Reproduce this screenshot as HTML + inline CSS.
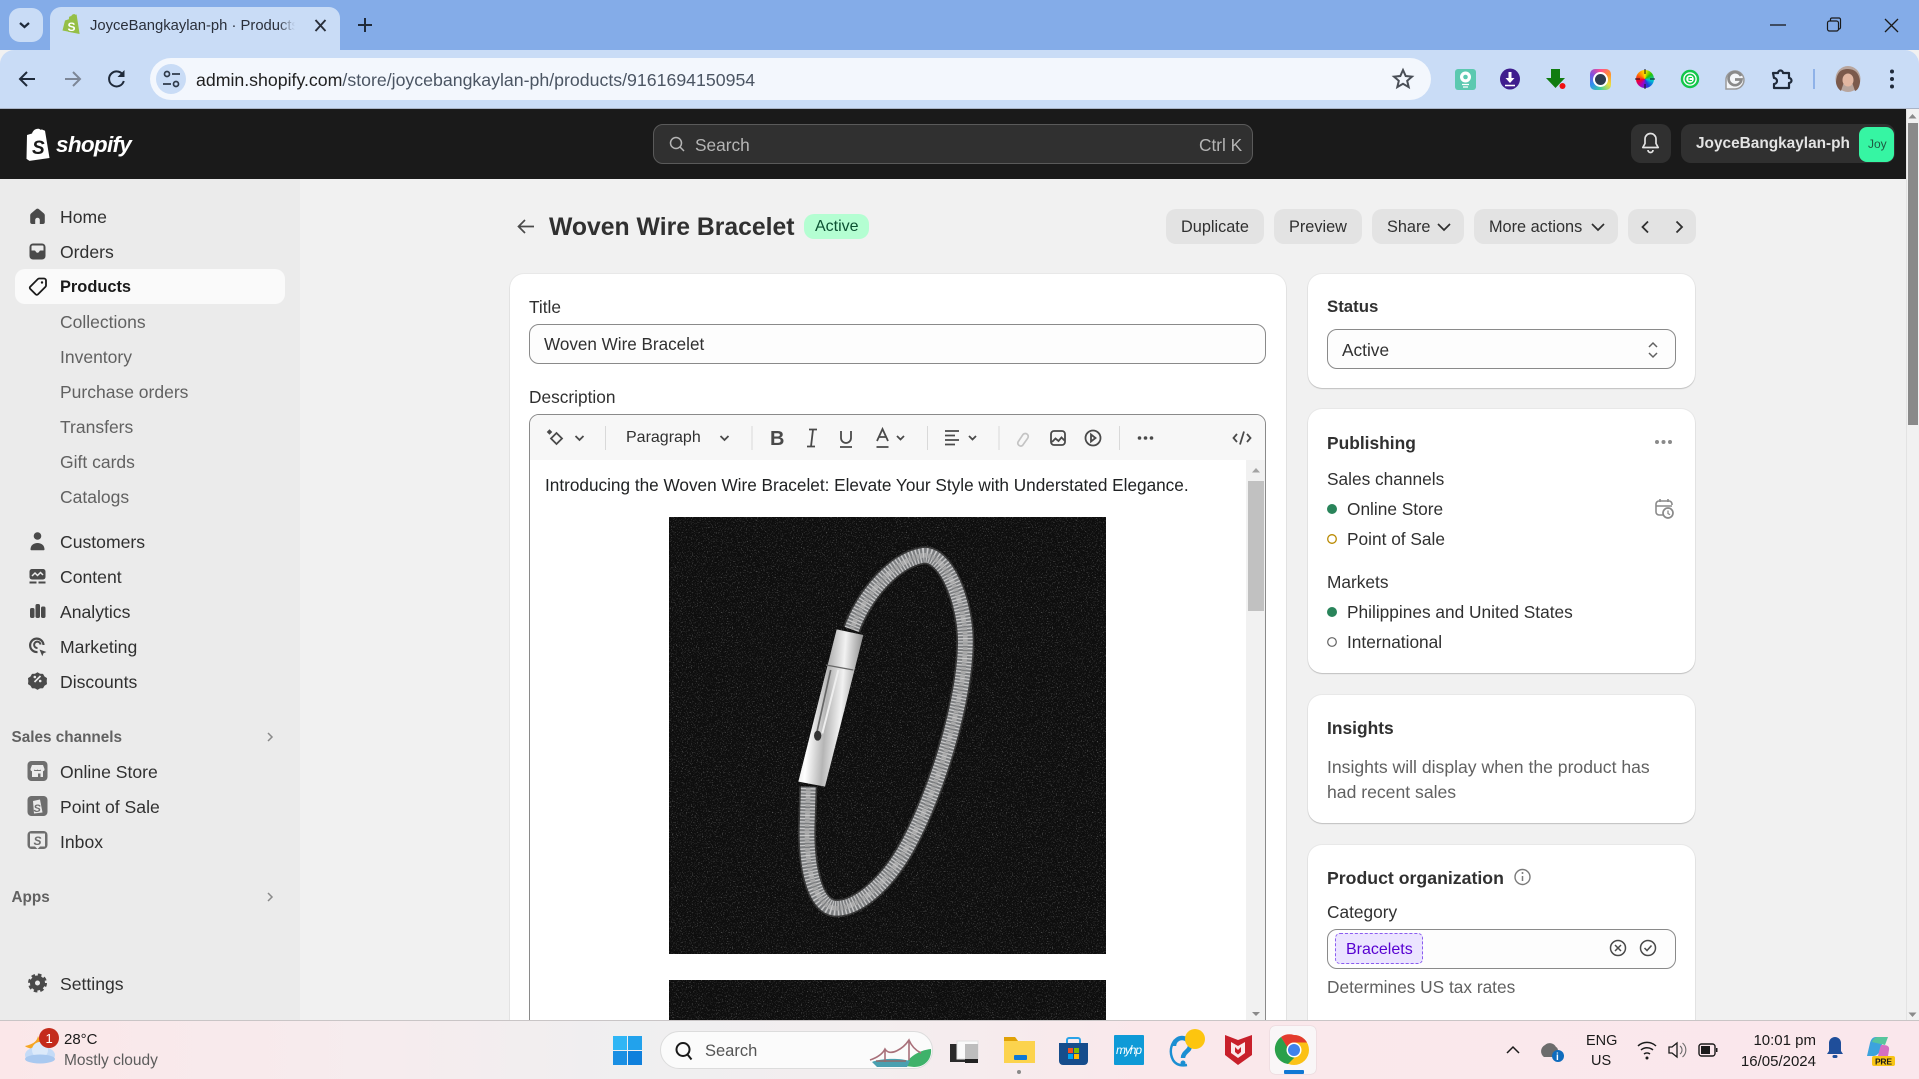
<!DOCTYPE html>
<html><head><meta charset="utf-8"><title>Woven Wire Bracelet</title>
<style>
html,body{margin:0;padding:0;width:1919px;height:1079px;overflow:hidden;background:#f1f1f1;font-family:"Liberation Sans",sans-serif;color:#303030}
.b{position:absolute;box-sizing:border-box}
.t{position:absolute;white-space:nowrap;line-height:20px;height:20px;font-size:17.3px;margin-top:1px;z-index:6}
.card{position:absolute;box-sizing:border-box;background:#fff;border-radius:14px;box-shadow:0 1px 1px rgba(0,0,0,.18),0 0 0 1px rgba(0,0,0,.035)}
.btn{position:absolute;box-sizing:border-box;background:#e3e3e3;border-radius:10px;height:35px;top:209px}
.nav{color:#303030;font-size:17.6px}.sub{color:#616161;font-size:17.5px}.hd{color:#616161;font-weight:bold;font-size:15.3px}
.bt{font-size:16.3px}
#ic{position:absolute;left:0;top:0;z-index:5}
</style></head><body>
<!-- browser chrome -->
<div class="b" style="left:0;top:0;width:1919px;height:50px;background:#84ace8"></div>
<div class="b" style="left:0;top:50px;width:1919px;height:59px;background:#c9dcf6;border-radius:14px 14px 0 0;border-bottom:1px solid #a9b4c6"></div>
<div class="b" style="left:9px;top:8px;width:34px;height:34px;background:#c9dcf6;border-radius:11px"></div>
<div class="b" style="left:50px;top:7px;width:290px;height:45px;background:#c9dcf6;border-radius:11px 11px 0 0"></div>
<div class="t" style="left:90px;top:15px;font-size:14.8px;color:#2a2f3a;width:205px;overflow:hidden;-webkit-mask-image:linear-gradient(90deg,#000 92%,transparent)">JoyceBangkaylan-ph · Products</div>
<div class="b" style="left:150px;top:58px;width:1281px;height:42px;background:#f3f7fd;border-radius:21px"></div>
<div class="b" style="left:156px;top:64px;width:30px;height:30px;background:#c9dcf6;border-radius:15px"></div>
<div class="t" style="left:196px;top:69px;font-size:17.73px;color:#1f1f1f">admin.shopify.com<span style="color:#4b5563">/store/joycebangkaylan-ph/products/9161694150954</span></div>
<!-- shopify header -->
<div class="b" style="left:0;top:109px;width:1906px;height:70px;background:#1a1a1a"></div>
<div class="t" style="left:56px;top:131px;height:26px;line-height:26px;font-size:22.5px;font-weight:bold;font-style:italic;color:#fff;letter-spacing:-.7px">shopify</div>
<div class="b" style="left:653px;top:124px;width:600px;height:40px;background:#303030;border:1px solid #5a5a5a;border-radius:10px"></div>
<div class="t" style="left:695px;top:134px;color:#b5b5b5">Search</div>
<div class="t" style="left:1199px;top:134px;color:#b5b5b5">Ctrl K</div>
<div class="b" style="left:1631px;top:124px;width:40px;height:39px;background:#303030;border-radius:10px"></div>
<div class="b" style="left:1681px;top:124px;width:214px;height:39px;background:#303030;border-radius:10px"></div>
<div class="t" style="left:1696px;top:133px;color:#e3e3e3;font-size:15.4px;font-weight:bold;">JoyceBangkaylan-ph</div>
<div class="b" style="left:1859px;top:127px;width:35px;height:35px;background:#36f5a3;border-radius:8px"></div>
<div class="t" style="left:1868px;top:133px;font-size:12px;color:#1f5a43">Joy</div>
<!-- sidebar -->
<div class="b" style="left:0;top:179px;width:300px;height:842px;background:#ebebeb"></div>
<div class="b" style="left:15px;top:269px;width:270px;height:35px;background:#fafafa;border-radius:10px"></div>
<div class="t nav" style="left:60px;top:206px">Home</div>
<div class="t nav" style="left:60px;top:241px">Orders</div>
<div class="t nav" style="left:60px;top:276px;font-weight:bold;color:#1a1a1a;font-size:16.4px">Products</div>
<div class="t sub" style="left:60px;top:311px">Collections</div>
<div class="t sub" style="left:60px;top:346px">Inventory</div>
<div class="t sub" style="left:60px;top:381px">Purchase orders</div>
<div class="t sub" style="left:60px;top:416px">Transfers</div>
<div class="t sub" style="left:60px;top:451px">Gift cards</div>
<div class="t sub" style="left:60px;top:486px">Catalogs</div>
<div class="t nav" style="left:60px;top:531px">Customers</div>
<div class="t nav" style="left:60px;top:566px">Content</div>
<div class="t nav" style="left:60px;top:601px">Analytics</div>
<div class="t nav" style="left:60px;top:636px">Marketing</div>
<div class="t nav" style="left:60px;top:671px">Discounts</div>
<div class="t hd" style="left:11.5px;top:727px">Sales channels</div>
<div class="t nav" style="left:60px;top:761px">Online Store</div>
<div class="t nav" style="left:60px;top:796px">Point of Sale</div>
<div class="t nav" style="left:60px;top:831px">Inbox</div>
<div class="t hd" style="left:11.5px;top:887px">Apps</div>
<div class="t nav" style="left:60px;top:973px">Settings</div>
<!-- page header -->
<div class="t" style="left:549px;top:212px;height:30px;line-height:30px;font-size:24.75px;font-weight:bold;color:#303030">Woven Wire Bracelet</div>
<div class="b" style="left:804px;top:214px;width:65px;height:25px;background:#b4fed2;border-radius:10px"></div>
<div class="t" style="left:815px;top:216px;font-size:16px;color:#0c5132">Active</div>
<div class="btn" style="left:1166px;width:98px"></div><div class="t bt" style="left:1181px;top:216px">Duplicate</div>
<div class="btn" style="left:1274px;width:88px"></div><div class="t bt" style="left:1289px;top:216px">Preview</div>
<div class="btn" style="left:1372px;width:92px"></div><div class="t bt" style="left:1387px;top:216px">Share</div>
<div class="btn" style="left:1474px;width:144px"></div><div class="t bt" style="left:1489px;top:216px">More actions</div>
<div class="btn" style="left:1628px;width:68px"></div>
<!-- main card -->
<div class="card" style="left:510px;top:274px;width:776px;height:786px"></div>
<div class="t" style="left:529px;top:296px">Title</div>
<div class="b" style="left:529px;top:324px;width:737px;height:40px;background:#fdfdfd;border:1px solid #8a8a8a;border-radius:10px"></div>
<div class="t" style="left:544px;top:334px;font-size:17.1px">Woven Wire Bracelet</div>
<div class="t" style="left:529px;top:386px">Description</div>
<div class="b" style="left:529px;top:414px;width:737px;height:636px;background:#fff;border:1px solid #8a8a8a;border-radius:10px 10px 0 0"></div>
<div class="b" style="left:530px;top:415px;width:735px;height:45px;background:#f7f7f7;border-radius:9px 9px 0 0"></div>
<div class="t" style="left:626px;top:427px;font-size:16px">Paragraph</div>
<div class="b" style="left:1246px;top:460px;width:19px;height:590px;background:#f1f1f1"></div>
<div class="b" style="left:1248px;top:481px;width:16px;height:130px;background:#c1c1c1"></div>
<div class="t" style="left:545px;top:474px;font-size:17.2px;color:#202223">Introducing the Woven Wire Bracelet: Elevate Your Style with Understated Elegance.</div>
<!-- status -->
<div class="card" style="left:1308px;top:274px;width:387px;height:114px"></div>
<div class="t" style="left:1327px;top:296px;font-weight:bold;font-size:16.8px">Status</div>
<div class="b" style="left:1327px;top:329px;width:349px;height:40px;background:#fdfdfd;border:1px solid #8a8a8a;border-radius:10px"></div>
<div class="t" style="left:1342px;top:339px">Active</div>
<!-- publishing -->
<div class="card" style="left:1308px;top:409px;width:387px;height:264px"></div>
<div class="t" style="left:1327px;top:432px;font-weight:bold;font-size:17.4px">Publishing</div>
<div class="t" style="left:1327px;top:468px">Sales channels</div>
<div class="t" style="left:1347px;top:498px">Online Store</div>
<div class="t" style="left:1347px;top:528px">Point of Sale</div>
<div class="t" style="left:1327px;top:571px">Markets</div>
<div class="t" style="left:1347px;top:601px">Philippines and United States</div>
<div class="t" style="left:1347px;top:631px">International</div>
<!-- insights -->
<div class="card" style="left:1308px;top:695px;width:387px;height:128px"></div>
<div class="t" style="left:1327px;top:717px;font-weight:bold;font-size:17.4px">Insights</div>
<div class="t sub" style="left:1327px;top:756px;font-size:17.6px">Insights will display when the product has</div>
<div class="t sub" style="left:1327px;top:781px;font-size:17.6px">had recent sales</div>
<!-- product org -->
<div class="card" style="left:1308px;top:845px;width:387px;height:215px"></div>
<div class="t" style="left:1327px;top:867px;font-weight:bold;font-size:17.7px">Product organization</div>
<div class="t" style="left:1327px;top:901px">Category</div>
<div class="b" style="left:1327px;top:929px;width:349px;height:40px;background:#fdfdfd;border:1px solid #8a8a8a;border-radius:10px"></div>
<div class="b" style="left:1335px;top:933px;width:88px;height:31px;background:#ebe4ff;border:1px dashed #8a5cf0;border-radius:5px"></div>
<div class="t" style="left:1346px;top:939px;font-size:16px;color:#5700d1">Bracelets</div>
<div class="t sub" style="left:1327px;top:976px;font-size:17.3px">Determines US tax rates</div>
<!-- page scrollbar -->
<div class="b" style="left:1906px;top:109px;width:13px;height:912px;background:#f1f1f1;border-left:1px solid #e3e3e3"></div>
<div class="b" style="left:1908px;top:123px;width:10px;height:302px;background:#8a8a8a"></div>
<!-- colour wheel extension -->
<div class="b" style="left:1636px;top:70px;width:18px;height:18px;border-radius:50%;background:conic-gradient(#ffe600,#29c400,#00c2d1,#1c3fe0,#a000c8,#f00030,#ff8000,#ffe600);z-index:4"></div>
<div class="b" style="left:1590px;top:69px;width:21px;height:21px;border-radius:5px;background:conic-gradient(#ff4f90,#ff9030,#e8e040,#40d0a0,#3090f0,#8050e0,#ff4f90);z-index:6"></div>
<div class="b" style="left:1593px;top:72px;width:15px;height:15px;border-radius:50%;background:#fff;z-index:6"></div>
<div class="b" style="left:1595px;top:74px;width:11px;height:11px;border-radius:50%;background:#2d3b4e;z-index:6"></div>
<!-- taskbar -->
<div class="b" style="left:0;top:1020px;width:1919px;height:59px;background:linear-gradient(90deg,#fbe7e9 0%,#f6ecee 20%,#efeff0 33%,#f3eeef 45%,#fae8eb 60%,#fae7ec 100%);border-top:1px solid #c9c5c6;z-index:7"></div>
<div class="t" style="left:64px;top:1029px;font-size:15px;color:#1a1a1a;z-index:8">28°C</div>
<div class="t" style="left:64px;top:1050px;font-size:15.5px;color:#5c5c5c;z-index:8">Mostly cloudy</div>
<div class="b" style="left:660px;top:1031px;width:273px;height:38px;background:#fbfbfb;border:1px solid #dcdcdc;border-radius:19px;z-index:8"></div>
<div class="t" style="left:705px;top:1040px;font-size:16.5px;color:#555;z-index:9">Search</div>
<div class="b" style="left:1270px;top:1026px;width:46px;height:48px;background:#f9f6f7;border-radius:5px;box-shadow:0 0 1px rgba(0,0,0,.25);z-index:8"></div>
<div class="t" style="left:1586px;top:1030px;font-size:14.5px;color:#1a1a1a;z-index:9">ENG</div>
<div class="t" style="left:1591px;top:1050px;font-size:14.5px;color:#1a1a1a;z-index:9">US</div>
<div class="t" style="left:1753px;top:1030px;width:63px;text-align:right;font-size:15px;color:#1a1a1a;z-index:9">10:01 pm</div>
<div class="t" style="left:1736px;top:1051px;width:80px;text-align:right;font-size:15px;color:#1a1a1a;z-index:9">16/05/2024</div>
<svg id="ic" width="1919" height="1079" style="z-index:5">
<defs>
<filter id="lth" x="0" y="0" width="100%" height="100%"><feTurbulence type="fractalNoise" baseFrequency=".8" numOctaves="3" seed="7"/><feColorMatrix values="0 0 0 0 1 0 0 0 0 1 0 0 0 0 1 2.3 0 0 0 -1.3"/></filter>
<linearGradient id="cl" x1="0" y1="0" x2="1" y2=".17"><stop offset="0" stop-color="#cfcfcf"/><stop offset=".25" stop-color="#fff"/><stop offset=".5" stop-color="#b5b5b5"/><stop offset=".72" stop-color="#f2f2f2"/><stop offset="1" stop-color="#8a8a8a"/></linearGradient>
</defs>
<!-- images -->
<rect x="669" y="517" width="437" height="437" fill="#0e0e0e"/>
<rect x="669" y="517" width="437" height="437" filter="url(#lth)" opacity=".5"/>
<rect x="669" y="980" width="437" height="41" fill="#0e0e0e"/>
<rect x="669" y="980" width="437" height="41" filter="url(#lth)" opacity=".5"/>
<g transform="translate(660 510) scale(.33333)" fill="none">
<path d="M575 358C610 260 700 150 790 136C860 130 915 280 916 390C918 560 830 860 730 1030C670 1130 590 1195 530 1195C470 1195 440 1090 441 960L445 830" stroke="#555" stroke-width="54" opacity=".55"/>
<path d="M575 358C610 260 700 150 790 136C860 130 915 280 916 390C918 560 830 860 730 1030C670 1130 590 1195 530 1195C470 1195 440 1090 441 960L445 830" stroke="#7c7e80" stroke-width="44"/>
<path d="M575 358C610 260 700 150 790 136C860 130 915 280 916 390C918 560 830 860 730 1030C670 1130 590 1195 530 1195C470 1195 440 1090 441 960L445 830" stroke="#dcdcdc" stroke-width="44" stroke-dasharray="4 6" opacity=".8"/>
<path d="M575 358C610 260 700 150 790 136C860 130 915 280 916 390C918 560 830 860 730 1030C670 1130 590 1195 530 1195C470 1195 440 1090 441 960L445 830" stroke="#a9a9a9" stroke-width="14" stroke-dasharray="8 4"/>
<polygon points="530,358 610,375 495,830 415,815" fill="url(#cl)"/>
<path d="M498 465L580 480" stroke="#666" stroke-width="4"/>
<path d="M512 480L470 670" stroke="#666" stroke-width="5"/>
<path d="M535 480L487 670" stroke="#eee" stroke-width="6"/>
<ellipse cx="473" cy="677" rx="11" ry="15" fill="#333"/>
</g>
<!-- chrome icons -->
<path d="M20 23l4.500 4 4.500-4" stroke="#1f2a3a" stroke-width="2.200" fill="none"/>
<path d="M69 17.500a1.500 1.500 0 0 1 1.300-1.200l.9-.2c.6-1.300 1.700-2 2.800-2 .8 0 1.200.3 1.400.6l1.200-.2 3 19.500-11.500-2.300z" fill="#95bf47"/>
<path d="M66 20.500l9-3 1.500 15.500-13-2.500z" fill="#95bf47" transform="translate(-1 0)"/>
<text x="67.500" y="31" font-size="12" font-weight="bold" font-family="Liberation Sans" fill="#fff">S</text>
<path d="M315.500 20l10 11M325.500 20l-10 11" stroke="#2a2f3a" stroke-width="1.900"/>
<path d="M365 18v14M358 25h14" stroke="#1f2a3a" stroke-width="2"/>
<path d="M35 79H20M27 72l-7 7 7 7" stroke="#1f2a3a" stroke-width="2" fill="none"/>
<path d="M65 79h15M73 72l7 7-7 7" stroke="#7d8797" stroke-width="2" fill="none"/>
<path d="M123.500 76a7.500 7.500 0 1 0 .3 5" stroke="#1f2a3a" stroke-width="2" fill="none"/><path d="M124.500 70v7h-7z" fill="#1f2a3a"/>
<g fill="none" stroke="#2f3a4a" stroke-width="1.700"><circle cx="167" cy="74" r="2.500"/><path d="M172 74h8M163 84h8"/><circle cx="176" cy="84" r="2.500"/></g>
<path d="M1770 25h16" stroke="#1a1a1a" stroke-width="1.300"/>
<g fill="none" stroke="#1a1a1a" stroke-width="1.200"><rect x="1827.500" y="21" width="11" height="10" rx="2"/><path d="M1830.500 21v-2a1.500 1.500 0 0 1 1.500-1h7a1.500 1.500 0 0 1 1.500 1.500v8a1.500 1.500 0 0 1-1.500 1.500h-1"/></g>
<path d="M1885 19l13 13M1898 19l-13 13" stroke="#1a1a1a" stroke-width="1.300"/>
<path d="M1403 70l2.700 6 6.300.6-4.800 4.200 1.500 6.300-5.700-3.300-5.700 3.300 1.500-6.300-4.800-4.200 6.300-.6z" fill="none" stroke="#4a4f57" stroke-width="2"/>
<!-- extensions -->
<rect x="1455" y="69" width="21" height="21" rx="3" fill="#5cc9b0"/><circle cx="1465.500" cy="77" r="5.500" fill="#fff"/><circle cx="1465.500" cy="77" r="2.300" fill="#5cc9b0"/><path d="M1462 84.500h7M1463 87h5" stroke="#fff" stroke-width="1.300"/>
<ellipse cx="1510" cy="79" rx="10" ry="10.500" fill="#3f1d8e"/><path d="M1510 72v8" stroke="#fff" stroke-width="3"/><path d="M1505.500 78h9l-4.500 5z" fill="#fff"/><path d="M1505 85.500h10" stroke="#fff" stroke-width="1.500"/>
<path d="M1551 69h9v9h5l-9.500 10-9.500-10h5z" fill="#107c10"/><circle cx="1562.500" cy="86" r="3" fill="#f01010"/>
<path d="M1635 79h5M1650 79h5M1645 69v5M1645 84v5" stroke="#111" stroke-width="1"/>
<path d="M1682 79a8 8 0 1 1 16 0 8 8 0 1 1-16 0" fill="#fff" stroke="#13c74a" stroke-width="2.400"/><circle cx="1690" cy="79" r="4.600" fill="none" stroke="#13c74a" stroke-width="1.600"/><path d="M1692 77.500h-3v3h3" fill="none" stroke="#13c74a"/>
<path d="M1726 89V79a9 9 0 1 1 9 10z" fill="#f4f6f9" stroke="#9a9a9a" stroke-width="1.500"/><path d="M1741 76a6.500 6.500 0 1 0 .500 3.500H1735" fill="none" stroke="#8a8a8a" stroke-width="2.700"/>
<path d="M1773 73h5a2.500 2.500 0 0 1 5 0h6v5a2.500 2.500 0 0 1 0 5v5h-15v-4a2.500 2.500 0 0 0 0-6z" fill="none" stroke="#1f2a3a" stroke-width="2.200" stroke-linejoin="round"/>
<path d="M1814 69v20" stroke="#8fb2e8" stroke-width="2"/>
<ellipse cx="1848" cy="79" rx="12.500" ry="13" fill="#b8a59d"/><path d="M1836 82c1-10 5-13 12-13s11 4 12 12c0 5-2 9-5 10l-3-9-3-3-5 3-3 9c-3-2-5-6-5-9z" fill="#7b5a4c"/><ellipse cx="1848" cy="80" rx="5.500" ry="6.500" fill="#e2b7a2"/>
<circle cx="1892" cy="71.500" r="2" fill="#1f2a3a"/><circle cx="1892" cy="79" r="2" fill="#1f2a3a"/><circle cx="1892" cy="86.500" r="2" fill="#1f2a3a"/>
<!-- shopify header icons -->
<path d="M27 135l5-1.500c1-3 3-4.500 6-4.700 1 0 1.800.3 2.300 1l1.700-.3 3 1.200 4.500 27.300-20 2.900-3-2z" fill="#fff"/>
<text x="32" y="154" font-size="19" font-weight="bold" font-style="italic" font-family="Liberation Sans" fill="#1a1a1a">S</text>
<circle cx="676" cy="143" r="5.500" fill="none" stroke="#b5b5b5" stroke-width="1.500"/><path d="M680 147l4 4" stroke="#b5b5b5" stroke-width="1.500"/>
<path d="M1650.500 133.500a5.500 5.500 0 0 1 5.500 5.500v4.500l2.200 4h-15.400l2.200-4V139a5.500 5.500 0 0 1 5.500-5.500zM1648 150a2.500 2.500 0 0 0 5 0" fill="none" stroke="#e3e3e3" stroke-width="1.700" stroke-linejoin="round"/>
<!-- page scrollbar arrows -->
<path d="M1912.500 114l-4 4.500h8z" fill="#8a8a8a"/><path d="M1912.500 1017l-4-4.500h8z" fill="#8a8a8a"/>
<!-- sidebar icons -->
<g fill="#4a4a4a">
<path d="M36 209.300a2.300 2.300 0 0 1 3 0l5 4.200a2.500 2.500 0 0 1 .8 1.900V222a2 2 0 0 1-2 2h-3v-4a2.300 2.300 0 0 0-4.600 0v4h-3a2 2 0 0 1-2-2v-6.600a2.500 2.500 0 0 1 .8-1.900z"/>
<rect x="29.500" y="243.500" width="16" height="16" rx="3.500"/><path d="M31.500 246.500a1 1 0 0 1 1-1h10a1 1 0 0 1 1 1v4h-3c-.8 0-1 .5-1.200 1-.3.700-1 1.200-1.800 1.200s-1.500-.5-1.800-1.200c-.2-.5-.4-1-1.200-1h-3z" fill="#ebebeb"/>
<circle cx="37.500" cy="536" r="3.800"/><path d="M30.500 549.500c0-4 3-6.500 7-6.500s7 2.500 7 6.500a.7.700 0 0 1-.7.700H31.200a.7.700 0 0 1-.7-.7z"/>
<rect x="29.500" y="569" width="16" height="10.500" rx="2.500"/><path d="M32 576l3-3 2.500 2.500 3-3 2.500 2.500" stroke="#ebebeb" stroke-width="1.500" fill="none"/><rect x="29.500" y="581.500" width="7" height="2"/><rect x="38.500" y="581.500" width="7" height="2"/>
<rect x="30" y="608" width="4.500" height="10" rx="1.700"/><rect x="35.500" y="604" width="4.500" height="14" rx="1.700"/><rect x="41" y="606.500" width="4.500" height="11.500" rx="1.700"/>
<path d="M39.500 649.500l7 2.500-3 1.200-1.200 3z"/>
<path d="M37.500 674l2.500 1.500 3 .1 1.500 2.600 2.500 1.600-.3 3 .3 3-2.500 1.600-1.500 2.600-3 .1-2.500 1.500-2.500-1.500-3-.1-1.500-2.600-2.500-1.600.3-3-.3-3 2.500-1.600 1.500-2.600 3-.1z" transform="translate(0 -1.700)"/>
<circle cx="37.500" cy="983" r="7.500"/>
<circle cx="37.500" cy="983" r="8" fill="none" stroke="#4a4a4a" stroke-width="3" stroke-dasharray="3.500 2.800"/>
</g>
<circle cx="37.500" cy="983" r="2.500" fill="#ebebeb"/>
<path d="M34.500 682l6-6" stroke="#ebebeb" stroke-width="1.700"/><circle cx="34.800" cy="677" r="1.300" fill="#ebebeb"/><circle cx="40.200" cy="681" r="1.300" fill="#ebebeb"/>
<path d="M43.500 645a6.700 6.700 0 1 0-6 7" fill="none" stroke="#4a4a4a" stroke-width="2.200"/><path d="M40.500 644.500a3.200 3.200 0 1 0-3 3.500" fill="none" stroke="#4a4a4a" stroke-width="2"/>
<path d="M39 278.500h5a2 2 0 0 1 2 2v5a2 2 0 0 1-.6 1.400l-7.500 7.500a1.600 1.600 0 0 1-2.200 0l-5.500-5.500a1.600 1.600 0 0 1 0-2.200l7.500-7.500a2 2 0 0 1 1.300-.7z" fill="none" stroke="#1a1a1a" stroke-width="1.800"/><circle cx="42" cy="282.500" r="1.200" fill="#1a1a1a"/>
<!-- channel icons -->
<g>
<rect x="27.500" y="761" width="20" height="20" rx="4" fill="#6e6e6e"/><path d="M32 765h11l1.500 4a2 2 0 0 1-4 .5 2.300 2.300 0 0 1-3 0 2.300 2.300 0 0 1-3 0 2 2 0 0 1-4-.5zM32 771h11v6h-2.500v-3.500h-2.500v3.500h-6z" fill="#ebebeb"/>
<rect x="27.500" y="796" width="20" height="20" rx="4" fill="#6e6e6e"/><path d="M33 801l7-1.500 2.500 13-8.500 1z" fill="#ebebeb"/><text x="33.500" y="812" font-size="11" font-weight="bold" font-style="italic" font-family="Liberation Sans" fill="#6e6e6e">S</text>
<rect x="27.500" y="831" width="20" height="18" rx="4" fill="#6e6e6e"/><path d="M30 833.500h15v13h-5l-2.500 2.500-2.500-2.500h-5z" fill="#ebebeb"/><text x="33.500" y="845" font-size="12" font-weight="bold" font-style="italic" font-family="Liberation Sans" fill="#6e6e6e">S</text>
<path d="M268 733l4 4-4 4M268 893l4 4-4 4" fill="none" stroke="#8a8a8a" stroke-width="1.500"/>
</g>
<!-- page header icons -->
<path d="M534 226.500h-15.500M525 220l-6.500 6.500 6.500 6.500" fill="none" stroke="#4a4a4a" stroke-width="1.700"/>
<path d="M1438 224l6 6 6-6M1592 224l6 6 6-6" fill="none" stroke="#303030" stroke-width="1.700"/>
<path d="M1648 221.500l-5.500 5.500 5.500 5.500M1676.500 221.500l5.500 5.500-5.500 5.500" fill="none" stroke="#303030" stroke-width="1.800"/>
<!-- editor toolbar -->
<g fill="none" stroke="#4a4a4a" stroke-width="1.800">
<path d="M556.500 433l5.500 5.500-5.500 5.500-5.500-5.500z"/><path d="M549.500 430.500l1.500 1.500-1.500 1.500-1.500-1.500z" fill="#4a4a4a"/>
<path d="M575.500 436l4 4 4-4M720.500 436l4 4 4-4M897 436l3.500 3.500 3.500-3.500M969 436l3.500 3.500 3.500-3.500"/>
<path d="M841 431v7a5 5 0 0 0 10 0v-7M840 447h12M876.500 447h12M877 441l5.500-12 5.500 12M879 437h7"/>
<path d="M945 431h14M945 435.500h10M945 440h14M945 444.500h10"/>
<rect x="1051" y="431" width="14" height="14" rx="3"/><path d="M1052 442l3.500-3.500 3 2.500 3-3.500 3 3"/>
<circle cx="1093" cy="438" r="7.500"/><path d="M1091 434.500l4.500 3.500-4.500 3.500z"/>
<path d="M1237 434l-3.500 4 3.500 4M1247 434l3.500 4-3.500 4M1244 431.500l-4 13"/>
<path d="M809 429.500h8M807 446.500h8M813 429.500l-2 17"/>
</g>
<path d="M1018 442a3 3 0 0 0 4.500 3.500l5-7a3 3 0 0 0-4.500-4l-5 7.500z" fill="none" stroke="#c4c4c4" stroke-width="1.700"/>
<text x="770" y="445" font-size="20" font-weight="bold" font-family="Liberation Sans" fill="#4a4a4a">B</text>
<circle cx="1139.500" cy="438" r="1.800" fill="#4a4a4a"/><circle cx="1145.500" cy="438" r="1.800" fill="#4a4a4a"/><circle cx="1151.500" cy="438" r="1.800" fill="#4a4a4a"/>
<path d="M605.500 426v24M752 426v24M927.500 426v24M999 426v24M1119.500 426v24" stroke="#d9d9d9" stroke-width="1"/>
<path d="M1256 468l-4 4.500h8z" fill="#a3a3a3"/><path d="M1256 1016l-4-4h8z" fill="#8a8a8a"/>
<!-- status chevrons -->
<path d="M1649 347l4-4 4 4M1649 353l4 4 4-4" fill="none" stroke="#616161" stroke-width="1.500"/>
<!-- publishing -->
<circle cx="1657" cy="442" r="2" fill="#8a8a8a"/><circle cx="1663.500" cy="442" r="2" fill="#8a8a8a"/><circle cx="1670" cy="442" r="2" fill="#8a8a8a"/>
<circle cx="1332" cy="509" r="5" fill="#29845a"/><circle cx="1332" cy="539" r="4.300" fill="none" stroke="#b98900" stroke-width="1.300"/>
<circle cx="1332" cy="612" r="5" fill="#29845a"/><circle cx="1332" cy="642" r="4.300" fill="none" stroke="#616161" stroke-width="1.200"/>
<path d="M1663 515h-4a3 3 0 0 1-3-3v-8a3 3 0 0 1 3-3h10a3 3 0 0 1 3 3v1M1656 506h16M1660 499v3M1668 499v3" fill="none" stroke="#8a8a8a" stroke-width="1.600"/>
<circle cx="1668" cy="513" r="5" fill="#fff" stroke="#8a8a8a" stroke-width="1.700"/><path d="M1668 510.500v3l2 1.200" fill="none" stroke="#8a8a8a" stroke-width="1.300"/>
<!-- product org icons -->
<circle cx="1522.500" cy="877" r="7.500" fill="none" stroke="#7a7a7a" stroke-width="1.400"/><path d="M1522.500 876v5" stroke="#7a7a7a" stroke-width="1.500"/><circle cx="1522.500" cy="873" r="1" fill="#7a7a7a"/>
<circle cx="1618" cy="948" r="7.500" fill="none" stroke="#4a4a4a" stroke-width="1.500"/><path d="M1615 945l6 6M1621 945l-6 6" stroke="#4a4a4a" stroke-width="1.500"/>
<circle cx="1648" cy="948" r="7.500" fill="none" stroke="#4a4a4a" stroke-width="1.500"/><path d="M1644.500 948l2.500 2.500 4.500-5" fill="none" stroke="#4a4a4a" stroke-width="1.500"/>
</svg>
<!-- taskbar icons -->
<svg width="1919" height="59" style="position:absolute;left:0;top:1020px;z-index:9">
<g transform="translate(0 -1020)">
<path d="M38 1036c-1 5-4 8-13 10 3 3 12 4 18 0z" fill="#f5a623"/>
<ellipse cx="40" cy="1055" rx="15" ry="8.500" fill="#c4dbf7"/><circle cx="40" cy="1050" r="8" fill="#dceafa"/><ellipse cx="40" cy="1059" rx="15" ry="4.500" fill="#a9c9f0"/>
<circle cx="49" cy="1038" r="10" fill="#c42b1c"/><text x="45.500" y="1043" font-size="13" font-family="Liberation Sans" fill="#fff">1</text>
<rect x="613" y="1036" width="14" height="14" fill="#30b6f5"/><rect x="628" y="1036" width="14" height="14" fill="#22a2ec"/><rect x="613" y="1051" width="14" height="14" fill="#1a8fe3"/><rect x="628" y="1051" width="14" height="14" fill="#0f80dc"/>
<circle cx="683" cy="1049.500" r="6.500" fill="none" stroke="#1a1a1a" stroke-width="2"/><path d="M687.500 1054.500l4 5" stroke="#1a1a1a" stroke-width="2"/>
<!-- bridge -->
<path d="M905 1066c2-8 14-16 26-17 1 10-6 18-17 18z" fill="#3fb26a"/><path d="M872 1062c10-4 28-4 38-1l-3 6h-30z" fill="#4aa0b0"/>
<path d="M885 1062v-13M909 1060v-20M870 1060c6-2 12-5 15-11 5 8 18 0 24-9 2 5 6 10 12 13" stroke="#a8707a" stroke-width="1.600" fill="none"/><path d="M876 1061h30" stroke="#8f6a6a" stroke-width="1.500"/>
<!-- task view -->
<rect x="950" y="1044" width="15" height="18" fill="#2b2b2b"/><rect x="957" y="1041" width="21" height="18" fill="#fafafa" stroke="#e0e0e0"/><rect x="965" y="1044" width="13" height="18" fill="#bdbdbd"/><rect x="965" y="1059" width="13" height="4" fill="#222"/>
<!-- folder -->
<path d="M1004 1037h11l3 4h17v22h-31z" fill="#fcd34d"/><path d="M1004 1037h11l3 4h-14z" fill="#e0a106"/><rect x="1014" y="1055" width="13" height="5" rx="1" fill="#0f78d4"/>
<circle cx="1019" cy="1072" r="2" fill="#8a8a8a"/>
<!-- store -->
<path d="M1059 1043h29v18a4 4 0 0 1-4 4h-21a4 4 0 0 1-4-4z" fill="#164d8c"/><path d="M1067 1043v-3a2 2 0 0 1 2-2h9a2 2 0 0 1 2 2v3" fill="none" stroke="#2aa3e8" stroke-width="2"/>
<rect x="1068" y="1048" width="5" height="5" fill="#f25022"/><rect x="1074" y="1048" width="5" height="5" fill="#7fba00"/><rect x="1068" y="1054" width="5" height="5" fill="#00a4ef"/><rect x="1074" y="1054" width="5" height="5" fill="#ffb900"/>
<!-- myhp -->
<rect x="1114" y="1035" width="30" height="30" rx="1" fill="#0e9ad7"/><text x="1116" y="1054" font-size="12" font-style="italic" font-family="Liberation Sans" fill="#fff" textLength="26">myhp</text>
<!-- help -->
<path d="M1174 1046a8 8 0 0 1 16 0c0 5-7 6-7 12" fill="none" stroke="#1b8fd2" stroke-width="4.500"/><circle cx="1183" cy="1063" r="2.500" fill="#1b8fd2"/><path d="M1175 1040c-4 5-6 12-2 20 3 5 8 6 14 5" fill="none" stroke="#1b8fd2" stroke-width="2.500"/>
<ellipse cx="1195" cy="1039" rx="10" ry="10" fill="#fdc50f"/>
<!-- mcafee -->
<path d="M1225 1035l13 5 14-5v20l-14 10-13-10z" fill="#c8202b"/><path d="M1231 1042l7 4 7-4v11l-7 5-7-5z" fill="#fbeaec"/><path d="M1235 1047l3 3 3-3v5l-3 2.500-3-2.500z" fill="#c8202b"/>
<!-- chrome -->
<rect x="1284" y="1070" width="20" height="4" rx="1" fill="#0f78d4"/>
<circle cx="1294" cy="1050" r="15" fill="#fbc116"/>
<path d="M1294 1035a15 15 0 0 1 13 7.500h-13a7.500 7.500 0 0 0-7 4.500l-6-10a15 15 0 0 1 13-2z" fill="#e33b2e"/>
<path d="M1281 1037a15 15 0 0 0 7 27l6.500-6.500a7.500 7.500 0 0 1-7-10z" fill="#2aa04a"/>
<circle cx="1294" cy="1050" r="7.500" fill="#fff"/><circle cx="1294" cy="1050" r="6" fill="#3f82ed"/>
<!-- tray -->
<path d="M1507 1053l6-6 6 6" fill="none" stroke="#1a1a1a" stroke-width="1.500"/>
<path d="M1544 1057a7 7 0 0 1 1-12 7 7 0 0 1 11 2c2 1 2 3 2 4v6z" fill="#6c6c6c"/><circle cx="1558" cy="1056" r="6" fill="#0f6cbd"/><text x="1556" y="1060" font-size="10" font-weight="bold" font-family="Liberation Sans" fill="#fff">i</text>
<g fill="none" stroke="#1a1a1a" stroke-width="1.500"><path d="M1638 1046a13 13 0 0 1 18 0M1641 1050a9 9 0 0 1 12 0M1644 1054a5 5 0 0 1 6 0"/></g><circle cx="1647" cy="1058" r="1.500" fill="#1a1a1a"/>
<path d="M1669 1047h3l5-4v14l-5-4h-3z" fill="none" stroke="#1a1a1a" stroke-width="1.300"/><path d="M1680 1046a5 5 0 0 1 0 8M1682.500 1043a9 9 0 0 1 0 14" fill="none" stroke="#6a6a6a" stroke-width="1.100"/>
<rect x="1699" y="1044" width="16" height="12" rx="2.500" fill="none" stroke="#1a1a1a" stroke-width="1.400"/><rect x="1701" y="1046" width="9" height="8" fill="#1a1a1a"/><rect x="1716" y="1048" width="1.500" height="4" fill="#1a1a1a"/>
<path d="M1835 1037a6 6 0 0 1 6 6v8l2 3h-16l2-3v-8a6 6 0 0 1 6-6z" fill="#1f4e9a"/><rect x="1832.500" y="1055" width="5" height="3" rx="1.500" fill="#1f4e9a"/>
<path d="M1867 1056l3-13c1-4 3-6 6-6h8l-3 11c-1 5-4 8-8 8z" fill="#3ca3dd"/><path d="M1872 1042c1-3 3-5 6-5h10l-3 8z" fill="#57c59d"/><path d="M1881 1045c4 0 9 0 8 5l-1 6h-10l2-8z" fill="#d46fc2"/>
<rect x="1872" y="1056" width="23" height="10" rx="2" fill="#f8c516"/><text x="1875" y="1064.500" font-size="8.500" font-weight="bold" font-family="Liberation Sans" fill="#1a1a1a" textLength="17">PRE</text>
</g></svg>
</body></html>
